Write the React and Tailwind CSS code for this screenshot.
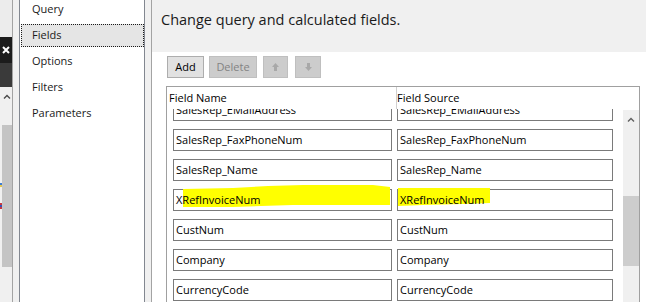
import React from 'react';

const navItems = ['Query', 'Fields', 'Options', 'Filters', 'Parameters'];

const fields = [
  'SalesRep_EMailAddress',
  'SalesRep_FaxPhoneNum',
  'SalesRep_Name',
  'XRefInvoiceNum',
  'CustNum',
  'Company',
  'CurrencyCode',
];

const ArrowIcon = ({ down }) => (
  <svg width="9" height="10" viewBox="0 0 9 10" className={down ? 'rotate-180' : ''}>
    <path d="M4.5 1 L8 5 L6 5 L6 9 L3 9 L3 5 L1 5 Z" fill="#a8a8a8" />
  </svg>
);

const LeftStrip = () => (
  <div className="w-[12px] shrink-0 flex flex-col">
    <div className="h-[37px] bg-[#ececec]" />
    <div className="h-[26px] bg-[#1c1c1c] flex items-center justify-center">
      <svg width="8" height="8" viewBox="0 0 8 8">
        <path d="M1 1 L7 7 M7 1 L1 7" stroke="#ffffff" strokeWidth="2" />
      </svg>
    </div>
    <div className="h-[24px] bg-[#3a3a3a]" />
    <div className="h-[38px] bg-[#f0f0f0] flex justify-end pr-[1px] pt-[7px]">
      <svg width="8" height="5" viewBox="0 0 8 5">
        <path d="M1 4.5 L4 1.5 L7 4.5" stroke="#4a4a4a" strokeWidth="1.4" fill="none" />
      </svg>
    </div>
    <div className="h-[142px] flex">
      <div className="w-[2px] bg-[#f0f0f0] flex flex-col">
        <div className="h-[58px]" />
        <div className="h-[2px] bg-[#3b7bd4]" />
        <div className="h-[2px] bg-[#e8c64a]" />
        <div className="h-[16px]" />
        <div className="h-[2px] bg-[#c8383c]" />
        <div className="h-[2px] bg-[#3850b8]" />
        <div className="h-[2px] bg-[#c8383c]" />
      </div>
      <div className="flex-1 bg-[#c4c4c4]" />
    </div>
    <div className="flex-1 bg-[#f0f0f0]" />
  </div>
);

const NavPanel = () => (
  <div className="w-[140px] shrink-0 flex bg-[#f0f0f0] border-x border-[#a3a3a3] px-[6px]">
    <div className="flex-1 bg-white border-x border-[#828790] flex flex-col -mt-[3px] text-[11px] text-[#1a1a1a]">
      {navItems.map((item) => (
        <div key={item} className="h-[26px] pt-[1px]">
          <div
            className={`h-[23px] ml-[1px] pl-[10px] flex items-center border ${
              item === 'Fields' ? 'bg-[#e5e5e5] border-dotted border-[#1a1a1a]' : 'border-transparent'
            }`}
          >
            {item}
          </div>
        </div>
      ))}
    </div>
  </div>
);

const Highlight = () => (
  <svg
    width="330"
    height="30"
    viewBox="0 -6 330 30"
    className="absolute left-0 -top-[6px] z-10 pointer-events-none"
  >
    <path
      d="M10 0 L60 -1 L95 -3 L130 -4 L200 -4 L217 -2 L217 16 L120 16 L88 17 L60 18 L10 18 Z"
      fill="#ffff00"
    />
    <path d="M225 -1 L317 -1 L317 14 L290 15 L250 16 L225 17 Z" fill="#ffff00" />
  </svg>
);

const FieldRow = ({ name }) => {
  const marked = name === 'XRefInvoiceNum';
  return (
    <div className="relative flex gap-[5px]">
      {marked && <Highlight />}
      <div className="w-[219px] h-[22px] border border-[#7a7a7a] pl-[2px] flex items-center">
        <span className="relative z-20">{name}</span>
      </div>
      <div className="w-[216px] h-[22px] border border-[#7a7a7a] pl-[2px] flex items-center">
        <span className="relative z-20">{name}</span>
      </div>
    </div>
  );
};

export default function App() {
  return (
    <div className="flex w-[646px] h-[302px] overflow-hidden bg-white font-['Open_Sans',sans-serif] text-black">
      <LeftStrip />
      <NavPanel />
      <div className="flex-1 flex flex-col">
        <div className="h-[52px] shrink-0 bg-[#f0f0f0] pl-[9px] pt-[8px] text-[14.5px] leading-[24px] text-[#1a1a1a]">
          Change query and calculated fields.
        </div>

        <div className="mt-[4px] ml-[15px] flex text-[11px]">
          <button className="w-[37px] h-[22px] bg-[#e1e1e1] border border-[#adadad] text-black">
            Add
          </button>
          <button className="ml-[5px] w-[48px] h-[22px] bg-[#cccccc] border border-[#bfbfbf] text-[#838383]">
            Delete
          </button>
          <button className="ml-[6px] w-[25px] h-[22px] bg-[#cccccc] border border-[#bfbfbf] flex items-center justify-center">
            <ArrowIcon />
          </button>
          <button className="ml-[7px] w-[26px] h-[22px] bg-[#cccccc] border border-[#bfbfbf] flex items-center justify-center">
            <ArrowIcon down />
          </button>
        </div>

        <div className="mt-[8px] ml-[14px] w-[474px] flex-1 flex flex-col border-x border-t border-[#a0a0a0] text-[11px]">
          <div className="h-[22px] shrink-0 flex items-center">
            <div className="w-[229px] pl-[2px]">Field Name</div>
            <div className="self-stretch w-px bg-[#d0d0d0]" />
            <div className="flex-1">Field Source</div>
          </div>
          <div className="flex-1 flex min-h-0">
            <div className="flex-1 overflow-hidden pl-[6px]">
              <div className="-mt-[10px] flex flex-col gap-[8px]">
                {fields.map((f) => (
                  <FieldRow key={f} name={f} />
                ))}
              </div>
            </div>
            <div className="w-[16px] mt-[1px] bg-[#f0f0f0] flex flex-col items-center">
              <svg width="8" height="5" viewBox="0 0 8 5" className="mt-[7px]">
                <path d="M1 4.5 L4 1.5 L7 4.5" stroke="#606060" strokeWidth="1.4" fill="none" />
              </svg>
              <div className="mt-[74px] w-[16px] h-[70px] bg-[#cdcdcd]" />
            </div>
          </div>
        </div>
      </div>
    </div>
  );
}
